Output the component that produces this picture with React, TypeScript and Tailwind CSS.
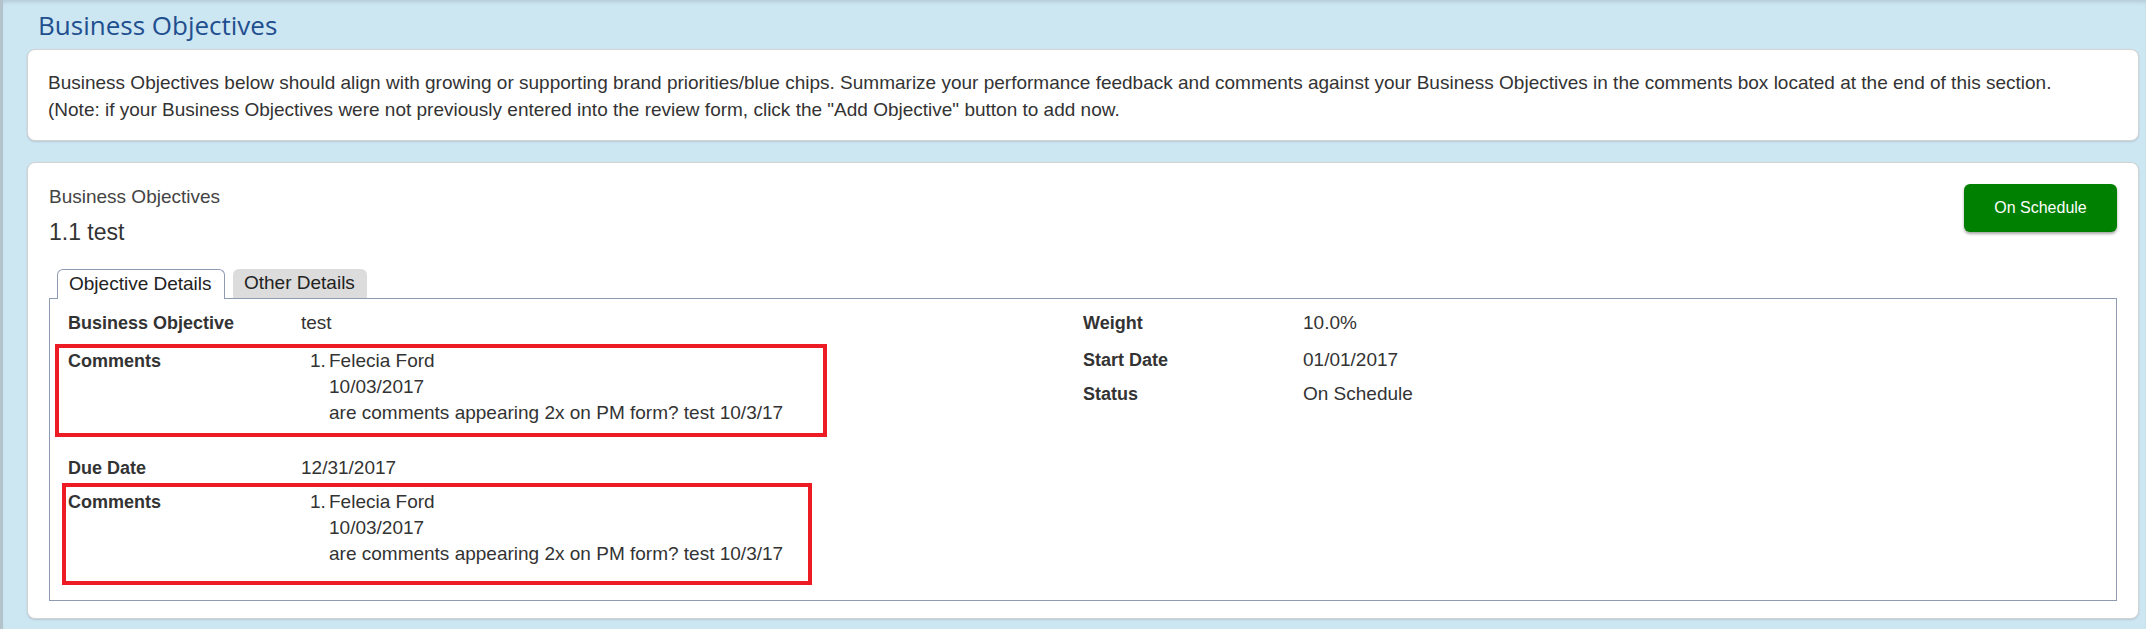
import React from 'react';

type Comment = { author: string; date: string; text: string };

const comment: Comment = {
  author: 'Felecia Ford',
  date: '10/03/2017',
  text: 'are comments appearing 2x on PM form? test 10/3/17',
};

function CommentList({ items }: { items: readonly Comment[] }): React.ReactElement {
  return (
    <div className="pl-[9px]">
      {items.map((c, i) => (
        <div key={i} className="flex">
          <span className="w-[19px]">{i + 1}.</span>
          <div>
            <div>{c.author}</div>
            <div>{c.date}</div>
            <div>{c.text}</div>
          </div>
        </div>
      ))}
    </div>
  );
}

function Field({ label, children }: { label: string; children: React.ReactNode }): React.ReactElement {
  return (
    <div className="flex">
      <div className="w-[233px] shrink-0 text-[18px] font-bold">{label}</div>
      <div className="text-[19px]">{children}</div>
    </div>
  );
}

function SideField({ label, value, className }: { label: string; value: string; className?: string }): React.ReactElement {
  return (
    <div className={`flex ${className ?? ''}`}>
      <div className="w-[220px] shrink-0 text-[18px] font-bold">{label}</div>
      <div className="text-[19px]">{value}</div>
    </div>
  );
}

export default function App(): React.ReactElement {
  return (
    <div className="h-[629px] w-full overflow-hidden border-l-[3px] border-[#b4c2cb] bg-[#cce6f2] font-['Liberation_Sans',Arial,sans-serif] text-[#333] shadow-[inset_0_4px_4px_-2px_rgba(0,0,0,0.12)]">
      <h1 className="mb-[6px] ml-[35px] h-[43px] pt-[7px] font-['Open_Sans',sans-serif] text-[26px] leading-[36px] text-[#1f4f8f]">
        Business Objectives
      </h1>

      {/* intro card */}
      <div className="ml-[24px] mr-[7px] rounded-[8px] border border-[#d3d3d3] bg-white px-[20px] pb-[17px] pt-[19px] text-[19px] leading-[27px] shadow-[0_1px_2px_rgba(0,0,0,0.12)]">
        <p>
          Business Objectives below should align with growing or supporting brand priorities/blue chips. Summarize your
          performance feedback and comments against your Business Objectives in the comments box located at the end of
          this section.
        </p>
        <p>
          (Note: if your Business Objectives were not previously entered into the review form, click the "Add Objective"
          button to add now.
        </p>
      </div>

      {/* objective card */}
      <div className="ml-[24px] mr-[7px] mt-[21px] rounded-[8px] border border-[#d3d3d3] bg-white px-[21px] pb-[17px] pt-[21px] shadow-[0_1px_2px_rgba(0,0,0,0.12)]">
        <div className="flex items-start justify-between">
          <div className="pt-[1px]">
            <div className="text-[19px] leading-[24px] text-[#444]">Business Objectives</div>
            <div className="mt-[9px] text-[23px] leading-[28px]">1.1 test</div>
          </div>
          <button className="h-[48px] w-[153px] rounded-[6px] bg-[#008000] text-[16px] text-white shadow-[0_2px_3px_rgba(0,0,0,0.35)]">
            On Schedule
          </button>
        </div>

        <div className="relative z-10 ml-[8px] mt-[23px] flex items-end gap-[8px] text-[19px]">
          <div className="-mb-[1px] flex h-[30px] w-[168px] items-center rounded-t-[6px] border border-b-0 border-[#8e9bb3] bg-white pl-[11px] text-[#222]">
            Objective Details
          </div>
          <div className="flex h-[29px] w-[134px] items-center rounded-t-[6px] bg-[#dcdcdc] pl-[11px] text-[#222]">
            Other Details
          </div>
        </div>

        <div className="flex border border-[#8e9bb3] leading-[26px]">
          <div className="w-[1033px] shrink-0 pb-[15px] pt-[11px]">
            <div className="pl-[18px]">
              <Field label="Business Objective">test</Field>
            </div>
            <div className="ml-[5px] mt-[8px] w-[772px] border-[4px] border-[#ed1c24] pb-[7px] pl-[9px]">
              <Field label="Comments">
                <CommentList items={[comment]} />
              </Field>
            </div>
            <div className="mt-[18px] pl-[18px]">
              <Field label="Due Date">12/31/2017</Field>
            </div>
            <div className="ml-[12px] mt-[2px] w-[750px] border-[4px] border-[#ed1c24] pb-[14px] pl-[2px] pt-[2px]">
              <Field label="Comments">
                <CommentList items={[comment]} />
              </Field>
            </div>
          </div>
          <div className="pt-[11px]">
            <SideField label="Weight" value="10.0%" />
            <SideField label="Start Date" value="01/01/2017" className="mt-[11px]" />
            <SideField label="Status" value="On Schedule" className="mt-[8px]" />
          </div>
        </div>
      </div>
    </div>
  );
}
